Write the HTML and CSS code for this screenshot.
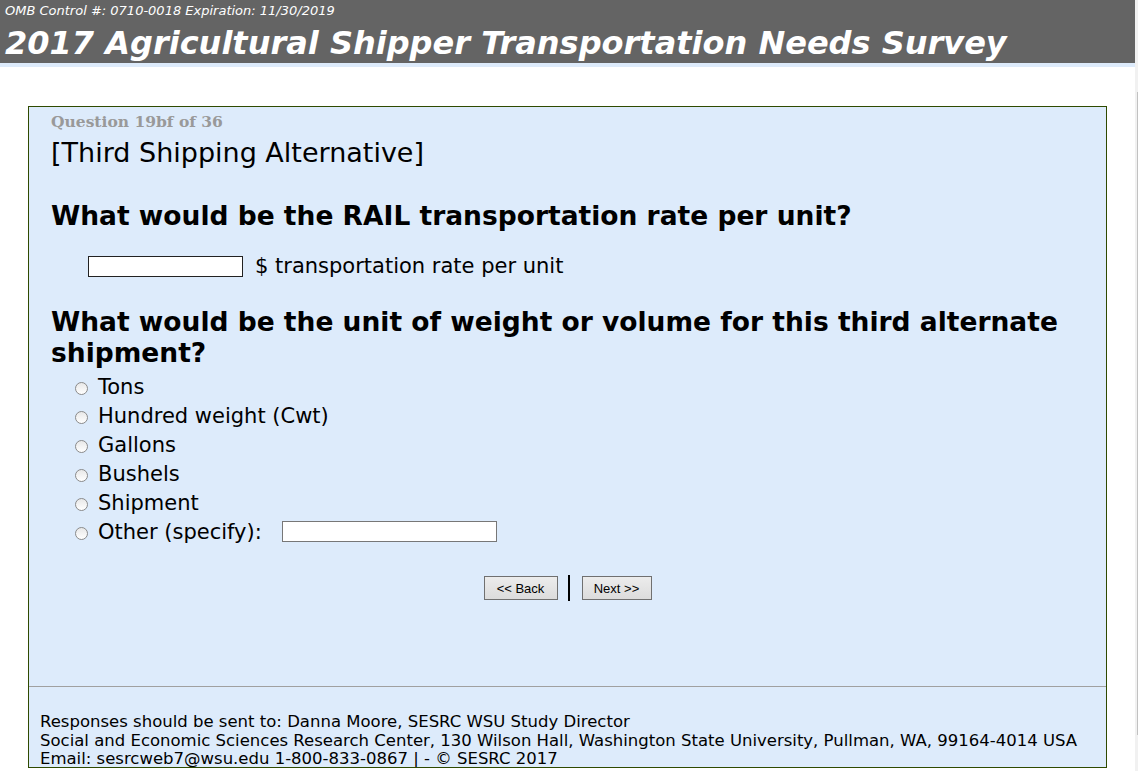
FILE: index.html
```html
<!DOCTYPE html>
<html>
<head>
<meta charset="utf-8">
<title>2017 Agricultural Shipper Transportation Needs Survey</title>
<link rel="stylesheet" href="styles.css">
</head>
<body>
<div class="page">
  <header class="banner">
    <div class="omb">OMB Control #: 0710-0018 Expiration: 11/30/2019</div>
    <h1 class="title">2017 Agricultural Shipper Transportation Needs Survey</h1>
  </header>
  <div class="strip"></div>
  <main class="survey">
    <section class="content">
      <div class="qnum">Question 19bf of 36</div>
      <div class="section">[Third Shipping Alternative]</div>
      <h2 class="question">What would be the RAIL transportation rate per unit?</h2>
      <div class="rate-row">
        <input type="text" class="text-input rate-input">
        <span class="rate-label">$ transportation rate per unit</span>
      </div>
      <h2 class="question q2">What would be the unit of weight or volume for this third alternate shipment?</h2>
      <ul class="options">
        <li><label><input type="radio" name="unit" class="radio"><span>Tons</span></label></li>
        <li><label><input type="radio" name="unit" class="radio"><span>Hundred weight (Cwt)</span></label></li>
        <li><label><input type="radio" name="unit" class="radio"><span>Gallons</span></label></li>
        <li><label><input type="radio" name="unit" class="radio"><span>Bushels</span></label></li>
        <li><label><input type="radio" name="unit" class="radio"><span>Shipment</span></label></li>
        <li><label><input type="radio" name="unit" class="radio"><span>Other (specify):</span></label><input type="text" class="text-input other-input"></li>
      </ul>
      <div class="nav">
        <button class="btn btn-back">&lt;&lt; Back</button>
        <span class="sep"></span>
        <button class="btn btn-next">Next &gt;&gt;</button>
      </div>
    </section>
    <footer class="footer">
      <div>Responses should be sent to: Danna Moore, SESRC WSU Study Director</div>
      <div>Social and Economic Sciences Research Center, 130 Wilson Hall, Washington State University, Pullman, WA, 99164-4014 USA</div>
      <div>Email: sesrcweb7@wsu.edu 1-800-833-0867 | - © SESRC 2017</div>
    </footer>
  </main>
</div>
<div class="scrollbar"><div class="thumb"></div></div>
</body>
</html>
```

FILE: styles.css
```css
html, body {
  margin: 0;
  padding: 0;
  background: #ffffff;
  overflow: hidden;
}
body {
  font-family: "DejaVu Sans", Verdana, sans-serif;
  color: #000;
  height: 771px;
}
.page {
  margin-right: 3px;
}
.banner {
  background: #646464;
  color: #fff;
  height: 63px;
  padding-left: 5px;
  box-sizing: border-box;
  overflow: hidden;
}
.omb {
  font-style: italic;
  font-size: 13px;
  line-height: 14px;
  padding-top: 4px;
}
.title {
  margin: 5px 0 0;
  font-size: 32px;
  font-weight: bold;
  font-style: italic;
  line-height: 40px;
  white-space: nowrap;
}
.strip {
  height: 4px;
  background: #ddebfb;
}
.survey {
  margin: 39px 0 0 28px;
  width: 1079px;
  height: 662px;
  box-sizing: border-box;
  border: 1px solid #2f4a00;
  background: #ddebfb;
  display: flex;
  flex-direction: column;
  overflow: hidden;
}
.content {
  height: 580px;
  flex: none;
  box-sizing: border-box;
  border-bottom: 1px solid #a0a0a0;
  padding: 6px 20px 0 22px;
}
.qnum {
  font-family: "DejaVu Serif", Georgia, serif;
  font-weight: bold;
  font-size: 15.5px;
  line-height: 18px;
  color: #999999;
}
.section {
  font-size: 27px;
  line-height: 32px;
  margin-top: 6px;
}
.question {
  font-size: 26.5px;
  font-weight: bold;
  line-height: 31px;
  margin: 31px 0 0 0;
}
.rate-row {
  display: flex;
  align-items: center;
  margin: 23px 0 0 37px;
  gap: 12px;
}
.text-input {
  background: #fff;
  margin: 0;
  padding: 0;
  box-sizing: border-box;
  font: inherit;
}
.rate-input {
  width: 155px;
  height: 21px;
  border: 1px solid #222;
}
.rate-label {
  font-size: 21px;
  line-height: 24px;
}
.q2 {
  margin-top: 28px;
}
.options {
  list-style: none;
  margin: 4px 0 0 24px;
  padding: 0;
}
.options li {
  display: flex;
  align-items: center;
  height: 29px;
}
.options label {
  display: flex;
  align-items: center;
  font-size: 21px;
}
.radio {
  appearance: none;
  -webkit-appearance: none;
  width: 13px;
  height: 13px;
  margin: 3px 10px 0 0;
  border: 1px solid #8a8a8a;
  border-radius: 50%;
  background: linear-gradient(#e8e8e8, #ffffff);
  box-sizing: border-box;
}
.other-input {
  width: 215px;
  height: 21px;
  border: 1px solid #777;
  margin-left: 20px;
}
.nav {
  display: flex;
  justify-content: center;
  align-items: center;
  margin-top: 29px;
  padding-right: 2px;
}
.btn {
  font-family: "Liberation Sans", Arial, sans-serif;
  font-size: 13px;
  height: 24px;
  padding: 0 8px;
  border: 1px solid #707070;
  background: linear-gradient(#ececec, #dcdcdc);
  color: #000;
  border-radius: 0;
}
.btn-back {
  width: 74px;
}
.btn-next {
  width: 70px;
}
.sep {
  width: 2px;
  height: 26px;
  margin: 0 12px 0 10px;
  background: #000;
}
.footer {
  padding: 26px 0 0 11px;
  font-size: 16.5px;
  line-height: 18.5px;
  white-space: nowrap;
}
.scrollbar {
  position: fixed;
  top: 0;
  right: 0;
  width: 3px;
  height: 771px;
  background: #f1f1f1;
}
.thumb {
  position: absolute;
  top: 92px;
  left: 2px;
  width: 1px;
  height: 643px;
  background: #c1c1c1;
}
```
